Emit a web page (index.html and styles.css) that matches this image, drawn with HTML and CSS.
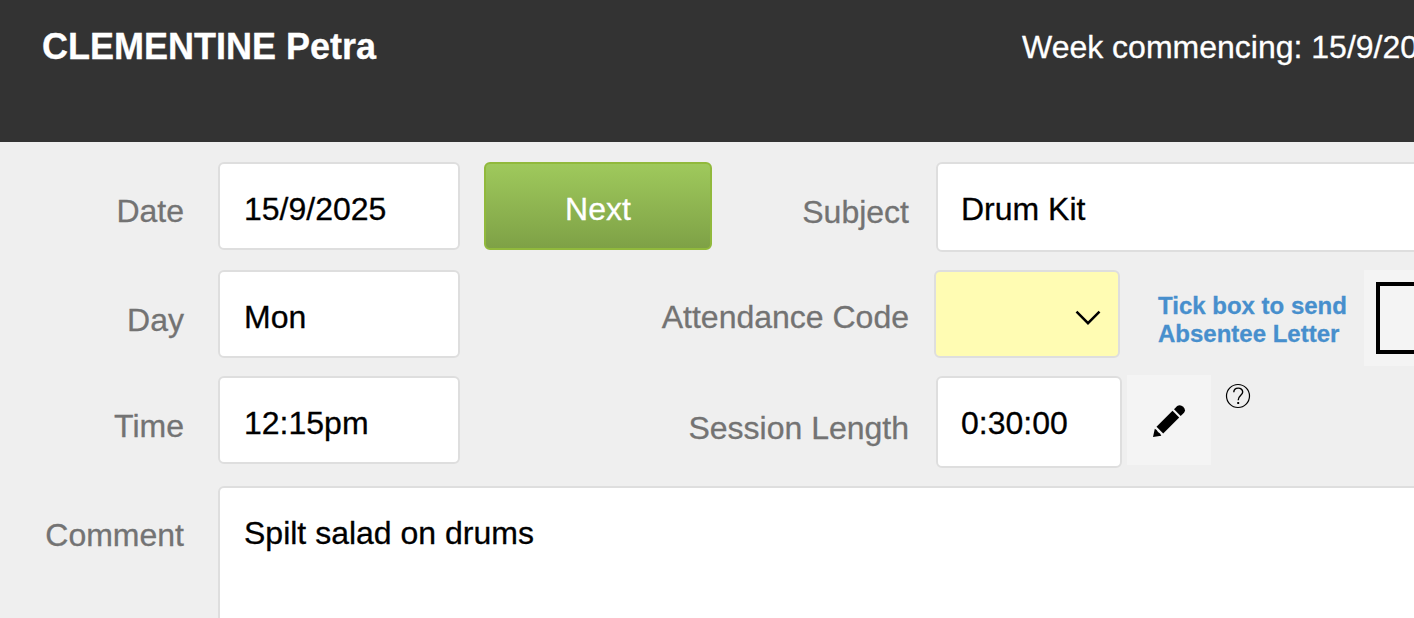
FILE: index.html
```html
<!DOCTYPE html>
<html lang="en">
<head>
<meta charset="utf-8">
<title>Attendance</title>
<link rel="stylesheet" href="styles.css">
</head>
<body>
<header class="header">
  <h1 class="student">CLEMENTINE Petra</h1>
  <div class="week">Week commencing: 15/9/2025</div>
</header>
<main class="form">
  <div class="label">Date</div>
  <div class="field">15/9/2025</div>
  <div class="middle">
    <button class="next" type="button">Next</button>
    <div class="label label-subject">Subject</div>
  </div>
  <div class="field field-subject">Drum Kit</div>

  <div class="label label-day">Day</div>
  <div class="field">Mon</div>
  <div class="label label-attendance">Attendance Code</div>
  <div class="attendance">
    <div class="select">
      <svg class="chevron" width="26" height="16" viewBox="0 0 26 16"><path d="M1.500 1.700 13 13.200 24.500 1.700" fill="none" stroke="#000" stroke-width="2.500"/></svg>
    </div>
    <div class="hint">Tick box to send<br>Absentee Letter</div>
    <div class="tick-panel"><div class="tick"></div></div>
  </div>

  <div class="label label-time">Time</div>
  <div class="field">12:15pm</div>
  <div class="label label-session">Session Length</div>
  <div class="session">
    <div class="field field-session">0:30:00</div>
    <div class="edit">
      <svg width="34" height="34" viewBox="0 0 34 34">
        <path d="M1 33 2.800 24.800Q5 25.500 6 28Q8.500 29 9.300 31.700Z"/>
        <path d="M4.500 22.800 20.500 6.800 27.200 13.500 11.200 29.500Z"/>
        <path d="M22 5.300 25.200 2.100Q28.200 0 31.200 2.800Q34.200 5.800 32 8.800L28.700 12Z"/>
      </svg>
    </div>
    <svg class="help" width="26" height="26" viewBox="0 0 26 26" fill="none" stroke="#000">
      <circle cx="13" cy="13" r="11.500" stroke-width="1.200"/>
      <path d="M8.800 9.300C8.800 3.800 17.700 3.800 17.700 9C17.700 12.300 13.200 12.400 13.200 17.200" stroke-width="1.400"/>
      <path d="M13.200 19V21" stroke-width="1.900"/>
    </svg>
  </div>

  <div class="label label-comment">Comment</div>
  <div class="field comment">Spilt salad on drums</div>
</main>
</body>
</html>
```
FILE: styles.css
```css
* { box-sizing: border-box; }
body {
  margin: 0;
  height: 618px;
  overflow: hidden;
  background: #efefef;
  font: 32px/36px "Liberation Sans", Arial, sans-serif;
  color: #000;
  -webkit-text-stroke: 0.3px currentColor;
}
.header {
  display: flex;
  justify-content: space-between;
  height: 142px;
  padding: 29px 0 0 42px;
  background: #333;
  color: #fff;
  white-space: nowrap;
}
.student {
  margin: -3px 0 0;
  font-size: 36px;
  line-height: 42px;
  font-weight: bold;
}
.week { width: 392px; }
.form {
  display: grid;
  grid-template-columns: 218px 242px 476px 478px;
  grid-template-rows: 108px 106px 110px 132px;
  align-items: start;
  padding-top: 20px;
}
.label {
  padding: 31px 34px 0 0;
  text-align: right;
  color: #737373;
}
.label-day { padding-top: 32px; }
.label-time { padding-top: 32px; }
.label-comment { padding-top: 31px; }
.middle {
  display: flex;
  justify-content: space-between;
}
.label-subject { padding: 32px 27px 0 0; }
.label-attendance { padding: 29px 27px 0 0; }
.label-session { padding: 34px 27px 0 0; }
.field {
  height: 88px;
  padding: 27px 24px 0;
  border: 2px solid #dedede;
  border-radius: 6px;
  background: #fff;
  white-space: nowrap;
}
.field-subject { width: 500px; height: 90px; padding-left: 23px; }
.next {
  width: 228px;
  height: 88px;
  margin-left: 24px;
  padding: 5px 0 0;
  border: 2px solid #91b93c;
  border-radius: 6px;
  background: linear-gradient(#9fc95c, #7ea146);
  color: #fff;
  font: inherit;
  -webkit-text-stroke: inherit;
}
.attendance, .session {
  display: flex;
  align-items: flex-start;
}
.select {
  display: flex;
  flex: none;
  justify-content: flex-end;
  width: 186px;
  height: 88px;
  margin-left: -2px;
  padding: 38px 17px 0 0;
  border: 2px solid #dedede;
  border-radius: 6px;
  background: #fffcb3;
}
.hint {
  flex: none;
  width: 206px;
  margin: 22px 0 0 38px;
  color: #478fcd;
  font-size: 24px;
  line-height: 28px;
  font-weight: bold;
}
.tick-panel {
  flex: none;
  width: 96px;
  height: 96px;
  padding: 12px;
  background: #f4f4f4;
}
.tick { height: 72px; border: 4px solid #000; }
.field-session { width: 186px; height: 92px; padding-left: 23px; }
.edit {
  width: 84px;
  height: 90px;
  margin: -1px 0 0 5px;
  padding: 29px 0 0 25px;
  background: #f4f4f4;
}
.edit svg { display: block; }
.help { margin: 7px 0 0 14px; }
.comment {
  grid-column: 2 / -1;
  width: 1220px;
  height: 150px;
  padding-top: 27px;
}
```
